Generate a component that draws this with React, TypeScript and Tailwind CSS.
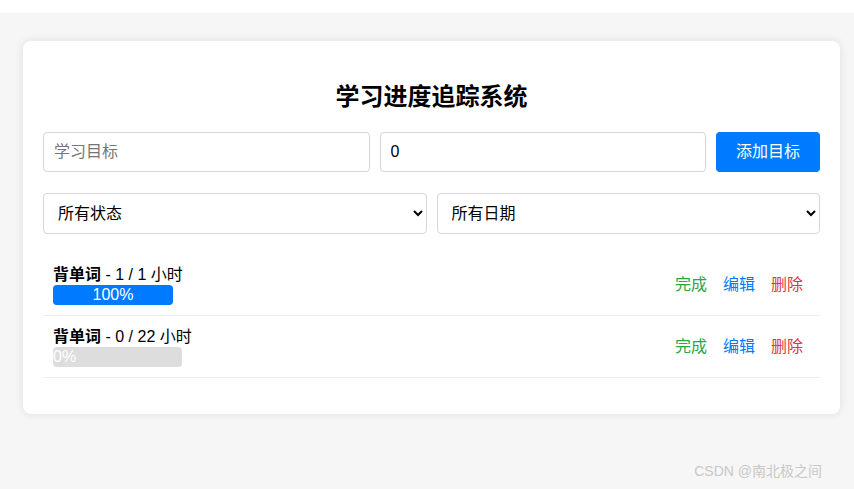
import React from "react";

const goals = [
  { name: "背单词", done: 1, total: 1, barW: 120 },
  { name: "背单词", done: 0, total: 22, barW: 129 },
];

export default function App() {
  return (
    <div
      className="relative min-h-[489px] bg-white text-black"
      style={{ fontFamily: '"Liberation Sans", Arial, "Noto Sans CJK SC", sans-serif' }}
    >
      <div className="h-[13px] bg-white" />
      <div className="min-h-[476px] bg-[#f6f6f6] pt-[28px]">
        <div className="ml-[23px] w-[817px] rounded-lg bg-white px-5 pt-5 pb-[36px] shadow-[0_0_10px_rgba(0,0,0,0.1)]">
          <h2 className="my-5 text-center text-[24px] font-bold leading-[31px]">学习进度追踪系统</h2>

          <div className="flex gap-[10px]">
            <input
              placeholder="学习目标"
              className="h-10 flex-1 rounded border border-[#d6d6d6] px-[10px] text-[16px] placeholder:text-[#757575] focus:outline-none"
            />
            <input
              defaultValue="0"
              type="number"
              className="h-10 flex-1 rounded border border-[#d6d6d6] px-[10px] text-[16px] focus:outline-none"
            />
            <button className="h-10 w-[104px] rounded bg-[#007bff] text-[16px] text-white">添加目标</button>
          </div>

          <div className="mt-[21px] flex gap-[10px]">
            <select className="h-[41px] flex-1 rounded border border-[#d6d6d6] bg-white px-[10px] text-[16px]">
              <option>所有状态</option>
            </select>
            <select className="h-[41px] flex-1 rounded border border-[#d6d6d6] bg-white px-[10px] text-[16px]">
              <option>所有日期</option>
            </select>
          </div>

          <ul className="mt-5">
            {goals.map((g, i) => {
              const pct = Math.round((g.done / g.total) * 100);
              return (
                <li key={i} className="flex items-center justify-between border-b border-[#eeeeee] pt-[11px] pb-[10px] pl-[10px] pr-[9px]">
                  <div>
                    <div className="text-[16px] leading-[20px]">
                      <strong>{g.name}</strong> - {g.done} / {g.total} 小时
                    </div>
                    <div className="h-5 overflow-visible rounded bg-[#dddddd]" style={{ width: g.barW }}>
                      <div
                        className={
                          pct > 0
                            ? "h-5 rounded bg-[#007bff] text-center text-[16px] leading-5 text-white"
                            : "h-5 whitespace-nowrap text-[16px] leading-5 text-white"
                        }
                        style={{ width: pct > 0 ? `${pct}%` : undefined }}
                      >
                        {pct}%
                      </div>
                    </div>
                  </div>
                  <div className="flex text-[16px]">
                    <button className="px-2 text-[#28a745]">完成</button>
                    <button className="px-2 text-[#007bff]">编辑</button>
                    <button className="px-2 text-[#dc3545]">删除</button>
                  </div>
                </li>
              );
            })}
          </ul>
        </div>
      </div>
      <div className="absolute right-[32px] bottom-[7px] text-[14px] text-[#c8c8c8]">CSDN @南北极之间</div>
    </div>
  );
}
